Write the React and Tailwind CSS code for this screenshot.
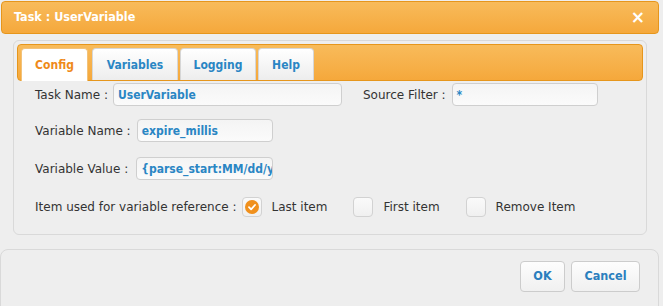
import React from "react";

const C = "font-['DejaVu_Sans',sans-serif] [font-stretch:condensed]";

function Tab({ label, active, w }) {
  return (
    <div
      className={
        "h-[32px] flex items-center justify-center rounded-t-[4px] border border-b-0 text-[12px] font-bold " +
        C +
        " " +
        w +
        (active
          ? " bg-white border-[#f2c27a] text-[#ef8a1a] h-[33px] -mb-[1px]"
          : " bg-gradient-to-b from-[#ffffff] to-[#ededed] border-[#d6d6d6] text-[#2a86c4]")
      }
    >
      {label}
    </div>
  );
}

function Input({ value, w }) {
  return (
    <div
      className={
        "h-[23px] rounded-[4px] border border-[#cfcfcf] bg-gradient-to-b from-[#f4f4f4] to-[#fbfbfb] px-[4px] flex items-center overflow-hidden whitespace-nowrap text-[12px] font-bold text-[#2a86c4] " +
        C +
        " " +
        w
      }
    >
      {value}
    </div>
  );
}

function Check({ checked }) {
  return (
    <div className="w-[20px] h-[20px] rounded-[4px] border border-[#d2d2d2] bg-gradient-to-b from-[#fafafa] to-[#f0f0f0] flex items-center justify-center">
      {checked && (
        <svg width="14" height="14" viewBox="0 0 14 14">
          <circle cx="7" cy="7" r="7" fill="#f0901c" />
          <path d="M4 7.2 L6.1 9.3 L10 5" stroke="#fff" strokeWidth="1.8" fill="none" strokeLinecap="round" strokeLinejoin="round" />
        </svg>
      )}
    </div>
  );
}

export default function App() {
  return (
    <div className="w-[663px] h-[306px] bg-[#eeeeee] overflow-hidden text-[#333333] text-[12px] font-['DejaVu_Sans',sans-serif]">
      <div className="pt-[1px] pl-[1px] w-[659px]">
        <div className="h-[33px] rounded-[4px] border border-[#e6961c] bg-gradient-to-b from-[#f8bb5a] to-[#f5a83b] flex items-center justify-between pl-[12px] pr-[13px]">
          <span className={"text-white text-[12.5px] font-bold " + C}>Task : UserVariable</span>
          <span className="text-white text-[17px] font-bold leading-none">×</span>
        </div>
      </div>
      <div className="pl-[13px] pt-[6px] w-[647px]">
        <div className="h-[195px] rounded-[6px] border border-[#d9d9d9] p-[3px]">
          <div className="h-[37px] rounded-[4px] border border-[#e6961c] bg-gradient-to-b from-[#f8bb5a] to-[#f5a83b] flex items-end pl-[3px] gap-[3px]">
            <Tab label="Config" active w="w-[67px]" />
            <Tab label="Variables" w="w-[86px] ml-[1px]" />
            <Tab label="Logging" w="w-[76px] -ml-[1px]" />
            <Tab label="Help" w="w-[56px] -ml-[1px]" />
          </div>
          <div className="pl-[18px] pt-[2px] flex flex-col">
            <div className="flex items-center h-[23px]">
              <span>Task Name :</span>
              <span className="ml-[5px]"><Input value="UserVariable" w="w-[229px]" /></span>
              <span className="ml-[21px]">Source Filter :</span>
              <span className="ml-[6px]"><Input value="*" w="w-[146px]" /></span>
            </div>
            <div className="flex items-center h-[23px] mt-[13px]">
              <span>Variable Name :</span>
              <span className="ml-[6px]"><Input value="expire_millis" w="w-[136px]" /></span>
            </div>
            <div className="flex items-center h-[23px] mt-[15px]">
              <span>Variable Value :</span>
              <span className="ml-[8px]"><Input value="{parse_start:MM/dd/yyyy}" w="w-[137px]" /></span>
            </div>
            <div className="flex items-center h-[20px] mt-[17px]">
              <span>Item used for variable reference :</span>
              <span className="ml-[5px]"><Check checked /></span>
              <span className="ml-[10px]">Last item</span>
              <span className="ml-[26px]"><Check /></span>
              <span className="ml-[10px]">First item</span>
              <span className="ml-[26px]"><Check /></span>
              <span className="ml-[10px]">Remove Item</span>
            </div>
          </div>
        </div>
      </div>
      <div className="mt-[14px] w-[659px] h-[70px] rounded-[8px] border border-[#d9d9d9] flex justify-end items-start pt-[11px] pr-[18px] gap-[6px]">
        <button className={"w-[45px] h-[31px] rounded-[4px] border border-[#cccccc] bg-gradient-to-b from-[#fdfdfd] to-[#f0f0f0] text-[12.5px] font-bold text-[#2a7fbe] " + C}>OK</button>
        <button className={"w-[69px] h-[31px] rounded-[4px] border border-[#cccccc] bg-gradient-to-b from-[#fdfdfd] to-[#f0f0f0] text-[12.5px] font-bold text-[#2a7fbe] " + C}>Cancel</button>
      </div>
    </div>
  );
}
